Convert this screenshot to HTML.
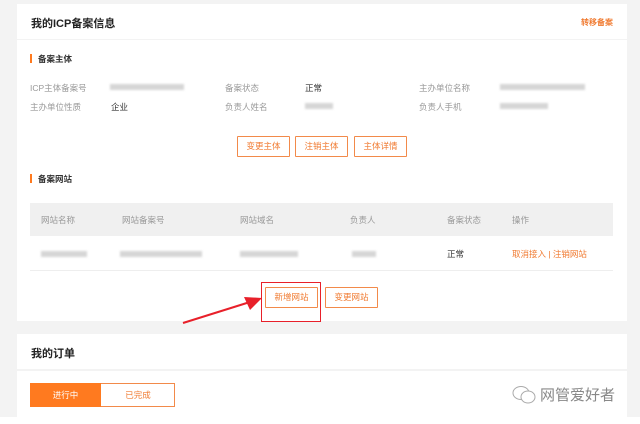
<!DOCTYPE html>
<html><head><meta charset="utf-8"><style>
*{margin:0;padding:0;box-sizing:border-box}
body{width:640px;height:424px;background:#f3f3f3;font-family:"Liberation Sans","Noto Sans CJK SC",sans-serif;font-size:8.5px;color:#333;position:relative;overflow:hidden}
.a{position:absolute;white-space:nowrap}
.card{position:absolute;left:17px;width:610px;background:#fff}
.g{color:#999}
.btn{position:absolute;border:1px solid #f28a4a;color:#f07a30;text-align:center;font-size:8.5px;background:#fff;border-radius:1px}
.bar{position:absolute;width:2px;height:9px;background:#ff7a1f}
.blur{position:absolute;height:6px;background:#d6d6d6;filter:blur(1px)}
</style></head><body>
<div class="card" style="top:4px;height:35px"></div>
<div class="card" style="top:40px;height:281px"></div>
<div class="a" style="left:31px;top:15px;font-size:11px;font-weight:bold;color:#222">我的ICP备案信息</div>
<div class="a" style="left:581px;top:17px;font-size:8px;color:#f07a30;font-weight:bold">转移备案</div>

<div class="bar" style="left:30px;top:54px"></div>
<div class="a" style="left:38px;top:53px;font-weight:bold;font-size:8.5px">备案主体</div>
<div class="a g" style="left:30px;top:82px">ICP主体备案号</div>
<div class="blur" style="left:110px;top:84px;width:74px"></div>
<div class="a g" style="left:225px;top:82px">备案状态</div>
<div class="a" style="left:305px;top:82px">正常</div>
<div class="a g" style="left:419px;top:82px">主办单位名称</div>
<div class="blur" style="left:500px;top:84px;width:85px"></div>
<div class="a g" style="left:30px;top:101px">主办单位性质</div>
<div class="a" style="left:111px;top:101px">企业</div>
<div class="a g" style="left:225px;top:101px">负责人姓名</div>
<div class="blur" style="left:305px;top:103px;width:28px"></div>
<div class="a g" style="left:419px;top:101px">负责人手机</div>
<div class="blur" style="left:500px;top:103px;width:48px"></div>

<div class="btn" style="left:237px;top:136px;width:53px;height:21px;line-height:19px">变更主体</div>
<div class="btn" style="left:295px;top:136px;width:53px;height:21px;line-height:19px">注销主体</div>
<div class="btn" style="left:354px;top:136px;width:53px;height:21px;line-height:19px">主体详情</div>

<div class="bar" style="left:30px;top:174px"></div>
<div class="a" style="left:38px;top:173px;font-weight:bold;font-size:8.5px">备案网站</div>

<div class="a" style="left:30px;top:203px;width:583px;height:33px;background:#f0f0f0"></div>
<div class="a g" style="left:41px;top:214px">网站名称</div>
<div class="a g" style="left:122px;top:214px">网站备案号</div>
<div class="a g" style="left:240px;top:214px">网站域名</div>
<div class="a g" style="left:350px;top:214px">负责人</div>
<div class="a g" style="left:447px;top:214px">备案状态</div>
<div class="a g" style="left:512px;top:214px">操作</div>
<div class="blur" style="left:41px;top:251px;width:46px"></div>
<div class="blur" style="left:120px;top:251px;width:82px"></div>
<div class="blur" style="left:240px;top:251px;width:58px"></div>
<div class="blur" style="left:352px;top:251px;width:24px"></div>
<div class="a" style="left:447px;top:248px">正常</div>
<div class="a" style="left:512px;top:248px;color:#f07a30">取消接入 | 注销网站</div>
<div class="a" style="left:30px;top:270px;width:583px;height:1px;background:#eee"></div>

<div class="btn" style="left:265px;top:287px;width:53px;height:21px;line-height:19px">新增网站</div>
<div class="btn" style="left:325px;top:287px;width:53px;height:21px;line-height:19px">变更网站</div>
<div class="a" style="left:261px;top:282px;width:60px;height:40px;border:1.5px solid #e8202a"></div>
<svg class="a" style="left:180px;top:290px" width="85" height="40"><line x1="3" y1="33" x2="70" y2="12" stroke="#e8202a" stroke-width="2"/><polygon points="82,8 64,7 70,20" fill="#e8202a"/></svg>

<div class="card" style="top:334px;height:35px"></div>
<div class="card" style="top:371px;height:46px"></div>
<div class="a" style="left:31px;top:345px;font-size:11px;font-weight:bold;color:#222">我的订单</div>
<div class="a" style="left:30px;top:383px;width:145px;height:24px;border:1px solid #f28a4a;background:#fff"></div>
<div class="a" style="left:30px;top:383px;width:71px;height:24px;background:#ff7a1f;color:#fff;text-align:center;line-height:24px">进行中</div>
<div class="a" style="left:101px;top:383px;width:74px;height:24px;color:#f07a30;text-align:center;line-height:24px">已完成</div>
<svg class="a" style="left:510px;top:384px" width="28" height="22"><ellipse cx="11" cy="9" rx="8" ry="6.5" fill="none" stroke="#aaa" stroke-width="1"/><ellipse cx="18" cy="13" rx="7" ry="6" fill="#fff" stroke="#aaa" stroke-width="1"/></svg>
<div class="a" style="left:540px;top:384px;font-size:15px;color:#888">网管爱好者</div>
<div class="a" style="left:0;top:417px;width:640px;height:7px;background:#fff"></div>
</body></html>
